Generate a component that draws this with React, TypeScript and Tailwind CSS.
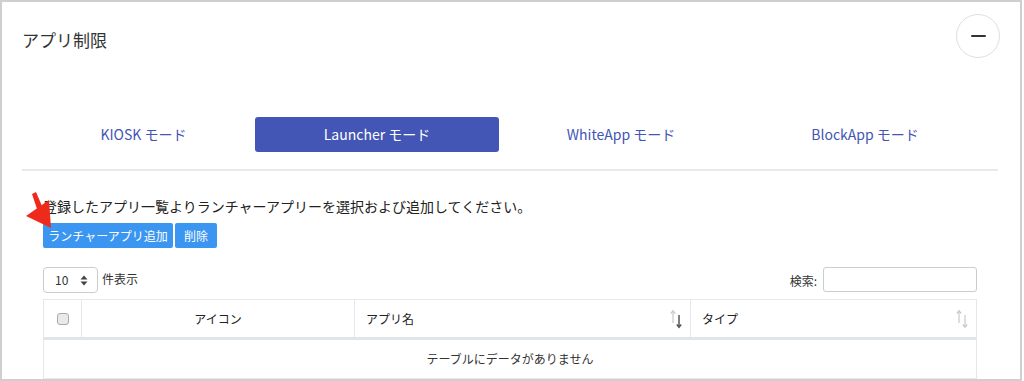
import React from "react";

function SortIcon({ dark }: { dark: boolean }) {
  return (
    <svg width="12" height="20" viewBox="0 0 12 20" className="shrink-0">
      <g stroke="#c9c9c9" strokeWidth="1.2" fill="none">
        <line x1="3" y1="2" x2="3" y2="14" />
        <polyline points="0.8,4.5 3,1.8 5.2,4.5" />
      </g>
      <g stroke={dark ? "#555555" : "#c9c9c9"} strokeWidth={dark ? 1.5 : 1.2} fill="none">
        <line x1="9" y1="6" x2="9" y2="18" />
        <polyline points="6.8,15.5 9,18.2 11.2,15.5" />
      </g>
    </svg>
  );
}

export default function App() {
  return (
    <div className="w-[1024px] h-[381px] bg-white font-['Noto_Sans_CJK_JP','Noto_Sans',sans-serif]">
      <div className="relative w-[1022px] h-[381px] border-2 border-[#cfcfcf] overflow-hidden px-[20px]">
        {/* header */}
        <div className="flex justify-between pt-[12px]">
          <h2 className="mt-[15px] text-[17px] leading-[22px] text-[#333333] font-normal">アプリ制限</h2>
          <button className="w-[44px] h-[44px] rounded-full border border-[#dcdfe4] bg-white flex items-center justify-center">
            <span className="block w-[15px] h-[2.5px] rounded-[1px] bg-[#333333]" />
          </button>
        </div>

        {/* tabs */}
        <div className="mt-[59px] flex h-[35px] text-[14px]">
          <div className="w-[233px] pl-[10px] flex items-center justify-center text-[#4355b5]">KIOSK モード</div>
          <div className="w-[244px] flex items-center justify-center rounded-[3px] bg-[#4355b5] text-white">Launcher モード</div>
          <div className="w-[244px] flex items-center justify-center text-[#4355b5]">WhiteApp モード</div>
          <div className="w-[244px] flex items-center justify-center text-[#4355b5]">BlockApp モード</div>
        </div>
        <div className="mt-[17px] h-[2px] w-[976px] bg-[#e9e9e9]" />

        {/* content */}
        <div className="pl-[21px] w-[955px]">
          <p className="mt-[25px] text-[14px] leading-[20px] text-[#222222]">
            登録したアプリ一覧よりランチャーアプリーを選択および追加してください。
          </p>
          <div className="mt-[7px] flex gap-[2px]">
            <button className="h-[25px] w-[130px] rounded-[2px] bg-[#3b96f2] text-white text-[12px] leading-[25px]">
              ランチャーアプリ追加
            </button>
            <button className="h-[25px] w-[42px] rounded-[2px] bg-[#3b96f2] text-white text-[12px] leading-[25px]">
              削除
            </button>
          </div>

          <div className="mt-[19px] w-[934px] flex justify-between items-start">
            <div className="flex items-center">
              <div className="w-[55px] h-[26px] border border-[#cccccc] rounded-[4px] flex items-center justify-between pl-[11px] pr-[9px]">
                <span className="text-[12px] text-[#333333]">10</span>
                <svg width="8" height="11" viewBox="0 0 8 11">
                  <polygon points="4,0.5 7.5,4.5 0.5,4.5" fill="#444444" />
                  <polygon points="4,10.5 7.5,6.5 0.5,6.5" fill="#444444" />
                </svg>
              </div>
              <span className="ml-[4px] text-[12px] text-[#333333] -mt-[2px]">件表示</span>
            </div>
            <div className="flex items-center">
              <span className="text-[12px] text-[#333333] mt-[2px]">検索:</span>
              <div className="ml-[6px] w-[154px] h-[25px] border border-[#cccccc] rounded-[3px] bg-white" />
            </div>
          </div>

          {/* table */}
          <div className="mt-[6px] w-[934px] border border-[#e6e8eb]">
            <div className="grid grid-cols-[38px_273px_336px_285px] h-[40px] border-b-[3px] border-[#e1e4e8] text-[12px] text-[#222222] font-normal">
              <div className="flex items-center justify-center border-r border-[#e6e8eb]">
                <span className="block w-[12px] h-[12px] rounded-[3px] border border-[#a9a9a9] bg-[#e9e9e9]" />
              </div>
              <div className="flex items-center justify-center border-r border-[#e6e8eb]">アイコン</div>
              <div className="flex items-center justify-between pl-[11px] pr-[8px] border-r border-[#e6e8eb]">
                <span>アプリ名</span>
                <SortIcon dark={true} />
              </div>
              <div className="flex items-center justify-between pl-[11px] pr-[8px]">
                <span>タイプ</span>
                <SortIcon dark={false} />
              </div>
            </div>
            <div className="h-[38px] flex items-center justify-center text-[12px] text-[#333333]">
              テーブルにデータがありません
            </div>
          </div>
        </div>

        {/* red annotation arrow */}
        <svg className="absolute left-[22px] top-[190px]" width="32" height="40" viewBox="0 0 32 40">
          <polygon points="8,2 12,0 18,14 13,17" fill="#ee2a1c" />
          <polygon points="2,24 25,8 27,36" fill="#ee2a1c" />
        </svg>
      </div>
    </div>
  );
}
